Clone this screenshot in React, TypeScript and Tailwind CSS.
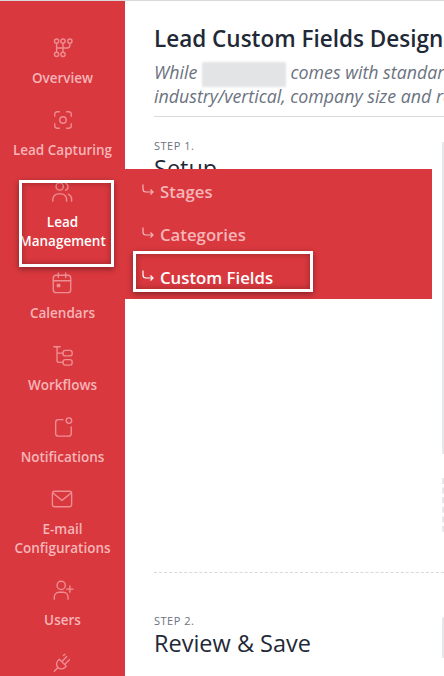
import React from "react";

function Icon({ children }: { children: React.ReactNode }) {
  return (
    <svg width="22" height="22" viewBox="0 0 24 24" fill="none" stroke="currentColor" strokeWidth="1.5" strokeLinecap="round" strokeLinejoin="round" className="shrink-0 text-[#ee8e92]">
      {children}
    </svg>
  );
}

const navItems = [
  {
    label: ["Overview"],
    icon: (
      <>
        <circle cx="5" cy="4.500" r="2.300" />
        <circle cx="12" cy="4.500" r="2.300" />
        <circle cx="19.500" cy="4.500" r="2.300" />
        <circle cx="5" cy="19" r="2.300" />
        <circle cx="12" cy="19" r="2.300" />
        <path d="M5 7v9.500M12 7v9.500M19.500 7v2a3 3 0 0 1-3 3H5" />
      </>
    ),
  },
  {
    label: ["Lead Capturing"],
    icon: (
      <>
        <path d="M8 3H5.500A2.500 2.500 0 0 0 3 5.500V8M16 3h2.500A2.500 2.500 0 0 1 21 5.500V8M8 21H5.500A2.500 2.500 0 0 1 3 18.500V16M16 21h2.500a2.500 2.500 0 0 0 2.500-2.500V16" />
        <circle cx="12" cy="12" r="3.500" />
      </>
    ),
  },
  {
    label: ["Lead", "Management"],
    active: true,
    icon: (
      <>
        <circle cx="9.500" cy="6" r="4" />
        <path d="M2 22v-2a6 6 0 0 1 6-6h3a6 6 0 0 1 6 6v2" />
        <path d="M16 2.500a4 4 0 0 1 0 7.500M19 14.500a6 6 0 0 1 3.500 5.500v2" />
      </>
    ),
  },
  {
    label: ["Calendars"],
    icon: (
      <>
        <rect x="2.500" y="3.500" width="19" height="19" rx="3" />
        <path d="M2.500 9.500h19M8 1v5M16 1v5" />
        <rect x="7" y="13.500" width="2.500" height="2.500" fill="currentColor" />
      </>
    ),
  },
  {
    label: ["Workflows"],
    icon: (
      <>
        <path d="M2 3h7M5.500 3v15a2 2 0 0 0 2 2H12M5.500 10H12" />
        <rect x="12" y="7" width="10" height="6" rx="2.500" />
        <rect x="12" y="17" width="10" height="6" rx="2.500" />
      </>
    ),
  },
  {
    label: ["Notifications"],
    icon: (
      <>
        <path d="M12 4H7a3 3 0 0 0-3 3v12a3 3 0 0 0 3 3h11a3 3 0 0 0 3-3v-7" />
        <circle cx="18.500" cy="5" r="3" />
      </>
    ),
  },
  {
    label: ["E-mail", "Configurations"],
    icon: (
      <>
        <rect x="1.500" y="3.500" width="21" height="17" rx="2.500" />
        <path d="M2 5.500l10 8 10-8" />
      </>
    ),
  },
  {
    label: ["Users"],
    icon: (
      <>
        <circle cx="10" cy="7" r="4.500" />
        <path d="M2.500 22v-2.500a5 5 0 0 1 5-5h5a5 5 0 0 1 5 5V22M19.500 7.500v7M16 11h7" />
      </>
    ),
  },
  {
    label: [],
    icon: (
      <path d="M8 9l7.500 7.500-1.500 1.500a5.300 5.300 0 0 1-7.500-7.500zM11 11.500l5-5.500M14 14.500l5-5M14 3.500l-1.500 1.500M6.500 18L2.500 22" />
    ),
  },
];

const subItems = [
  { label: "Stages" },
  { label: "Categories" },
  { label: "Custom Fields", active: true },
];

export default function App() {
  return (
    <div className="relative flex h-[676px] w-[444px] overflow-hidden border-t border-[#d9d9d9] bg-white font-['Open_Sans','Noto_Sans',sans-serif]">
      {/* Sidebar */}
      <nav className="flex w-[125px] shrink-0 flex-col items-center gap-[21px] bg-[#d9383e] pt-[36px]">
        {navItems.map((item, i) => (
          <div key={i} className="flex flex-col items-center gap-[10px]">
            <Icon>{item.icon}</Icon>
            {item.label.length > 0 && (
              <div className={`text-center text-[13.5px] leading-[19px] font-semibold ${item.active ? "text-white" : "text-[#f7b5b8]"}`}>
                {item.label.map((line) => (
                  <div key={line} className="whitespace-nowrap">{line}</div>
                ))}
              </div>
            )}
          </div>
        ))}
      </nav>

      {/* Main content */}
      <main className="min-w-0 flex-1 pl-[29px] pt-[23px]">
        <h1 className="whitespace-nowrap text-[22.5px] leading-[30px] font-semibold text-[#1f2937]">Lead Custom Fields Designer</h1>
        <p className="mt-[6px] w-[500px] text-[17.8px] leading-[24px] text-[#6b7280] italic">
          <span className="block h-[24px] whitespace-nowrap">
            While <span className="inline-block h-[25px] w-[84px] bg-[#e3e4e6] align-middle blur-[1px]" /> comes with standard
          </span>
          <span className="block h-[24px] whitespace-nowrap">industry/vertical, company size and requirements</span>
        </p>
        <div className="mt-[8px] border-t border-[#d9d9d9]" />
        <div className="mt-[25px] flex">
          <div className="-mt-[3px] w-[288px] shrink-0">
            <div className="text-[11px] leading-[14px] font-medium tracking-[0.5px] text-[#6b7280]">STEP 1.</div>
            <div className="mt-[1px] text-[23.5px] leading-[28px] font-medium text-[#1f2937]">Setup</div>
          </div>
          <div className="flex w-[40px] flex-col gap-[24px]">
            <div className="h-[312px] rounded-l border-2 border-r-0 border-[#e5e7eb]" />
            <div className="h-[54px] rounded-l border-2 border-r-0 border-dashed border-[#e5e7eb]" />
          </div>
        </div>
        <div className="mt-[40px] border-t border-dashed border-[#d9d9d9]" />
        <div className="mt-[44px] flex">
          <div className="-mt-[3px] w-[288px] shrink-0">
            <div className="text-[11px] leading-[14px] font-medium tracking-[0.5px] text-[#6b7280]">STEP 2.</div>
            <div className="mt-[1px] text-[23.5px] leading-[28px] font-medium text-[#1f2937]">Review &amp; Save</div>
          </div>
          <div className="h-[41px] w-[40px] rounded-l border-2 border-r-0 border-[#e5e7eb]" />
        </div>
      </main>

      {/* Flyout submenu */}
      <div className="absolute left-[125px] top-[168px] flex h-[130px] w-[307px] flex-col bg-[#d9383e] pt-[1px]">
        {subItems.map((s) => (
          <div key={s.label} className={`flex h-[43px] items-center pl-[16px] text-[16.75px] font-semibold ${s.active ? "text-white" : "text-[#f7b5b8]"}`}>
            <svg width="14" height="14" viewBox="0 0 14 14" fill="none" stroke="currentColor" strokeWidth="1.2" className="mr-[5px] -mt-[4px] shrink-0">
              <path d="M2 1.500v4.500a3 3 0 0 0 3 3h7M9.500 6.500L12 9l-2.500 2.500" />
            </svg>
            {s.label}
          </div>
        ))}
      </div>

      {/* Highlight boxes */}
      <div className="absolute left-[19px] top-[179px] h-[87px] w-[95px] border-[3px] border-white shadow-[0_2px_6px_rgba(0,0,0,0.4),inset_0_0_6px_rgba(0,0,0,0.3)]" />
      <div className="absolute left-[133px] top-[250px] h-[41px] w-[180px] border-[3px] border-white shadow-[0_2px_6px_rgba(0,0,0,0.4),inset_0_0_6px_rgba(0,0,0,0.3)]" />
    </div>
  );
}
